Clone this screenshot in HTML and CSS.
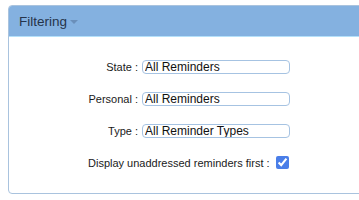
FILE: index.html
```html
<!DOCTYPE html>
<html lang="en">

<head>
    <meta charset="UTF-8">
    <meta name="viewport" content="width=device-width, initial-scale=1.0">
    <title>Filtering</title>
    <link rel="stylesheet" href="styles.css">
</head>

<body>
    <div class="panel">
        <div class="panel-header">
            <h2>Filtering<span class="caret"></span></h2>
        </div>
        <div class="panel-body">
            <div class="field">
                <label for="filter_state">State :</label>
                <input class="text-input" type="text" id="filter_state" value="All Reminders">
            </div>
            <div class="field">
                <label for="filter_personal">Personal :</label>
                <input class="text-input" type="text" id="filter_personal" value="All Reminders">
            </div>
            <div class="field">
                <label for="filter_type">Type :</label>
                <input class="text-input" type="text" id="filter_type" value="All Reminder Types">
            </div>
            <div class="check-field">
                <label for="filter_unaddressed">Display unaddressed reminders first :</label>
                <input class="checkbox" type="checkbox" id="filter_unaddressed" checked>
            </div>
        </div>
    </div>
</body>

</html>
```

FILE: styles.css
```css
h2,
body {
    padding: 0px;
    margin: 0px;
}

body {
    font-family: 'Liberation Sans', Arial, sans-serif;
    color: #222;
    background: #fff;
    overflow: hidden;
}

.panel {
    margin: 5px 0 0 8px;
    width: 420px;
    height: 189px;
    border: 1px solid #a9c3de;
    border-radius: 4px;
    box-sizing: border-box;
    overflow: hidden;
}

.panel-header {
    height: 31px;
    background: #84b1e0;
    border-bottom: 1px solid #b4e0fa;
    box-sizing: border-box;
    display: flex;
    align-items: center;
    padding-left: 10px;
}

.panel-header h2 {
    font-size: 13.5px;
    font-weight: normal;
    color: #26344a;
}

.caret {
    display: inline-block;
    width: 0;
    height: 0;
    border-left: 4px solid transparent;
    border-right: 4px solid transparent;
    border-top: 4px solid #6a8fba;
    vertical-align: middle;
    margin-left: 3px;
}

.panel-body {
    padding-top: 23px;
    font-size: 11px;
    color: #1a1a1a;
}

.field {
    display: grid;
    grid-template-columns: 129px 148px;
    column-gap: 4px;
    align-items: center;
    height: 14px;
    margin-bottom: 18px;
}

.field label {
    text-align: right;
}

.text-input {
    box-sizing: border-box;
    height: 14px;
    width: 148px;
    margin: 0;
    padding: 0 2px;
    border: 1px solid #a6c3e2;
    border-radius: 4px;
    font-family: 'Liberation Sans', Arial, sans-serif;
    font-size: 12px;
    color: #111;
    outline: none;
}

.check-field {
    display: flex;
    align-items: center;
    margin-left: 79px;
    margin-top: 2px;
    height: 13px;
}

.checkbox {
    width: 13px;
    height: 13px;
    margin: 0 0 0 6px;
    accent-color: #4a7ee8;
}
```
